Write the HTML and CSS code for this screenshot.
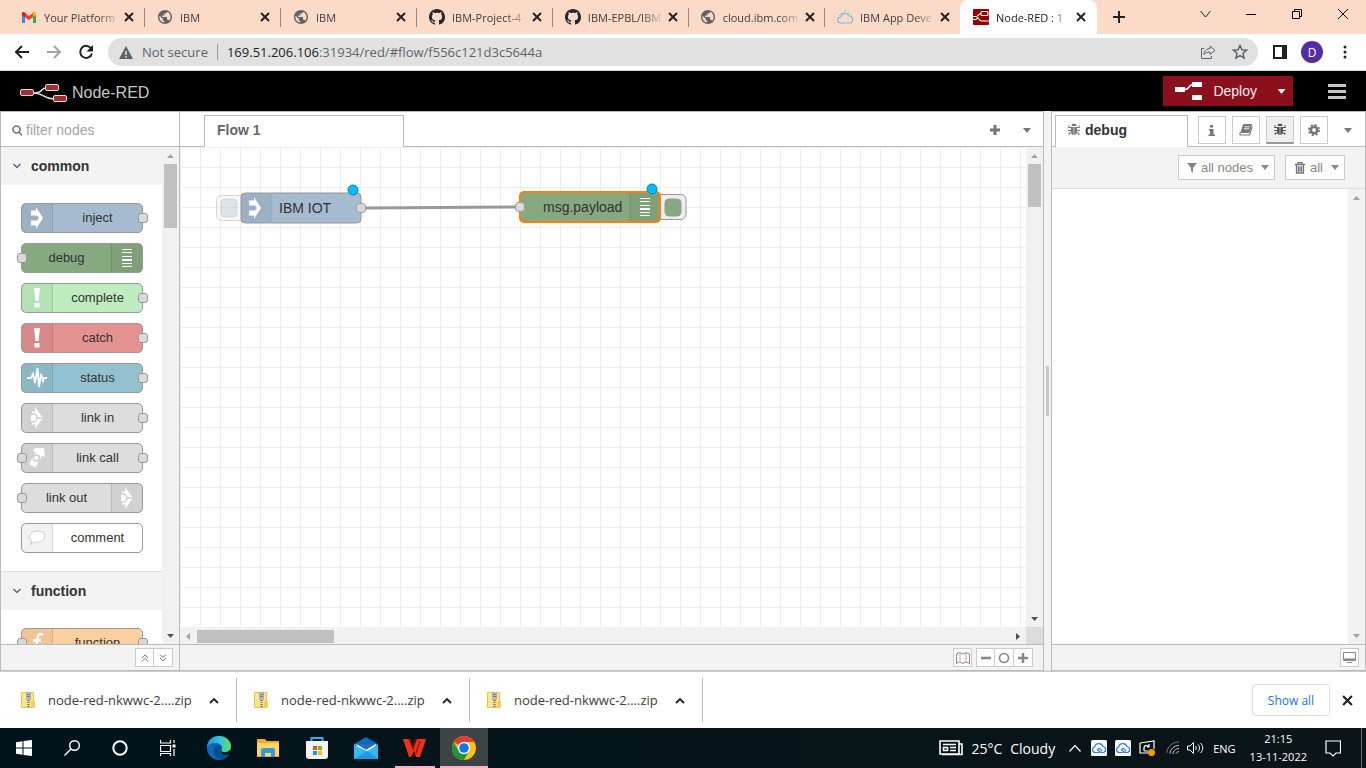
FILE: index.html
```html
<!DOCTYPE html>
<html lang="en">
<head>
<meta charset="utf-8">
<title>Node-RED</title>
<link rel="stylesheet" href="styles.css">
</head>
<body>
<svg class="sprite" aria-hidden="true">
  <symbol id="globe" viewBox="2 2 20 20"><path fill="#5f6368" d="M12 2C6.480 2 2 6.480 2 12s4.480 10 10 10 10-4.480 10-10S17.520 2 12 2zm-1 17.930c-3.950-.49-7-3.850-7-7.930 0-.62.08-1.210.21-1.790L9 15v1c0 1.100.9 2 2 2v1.930zm6.900-2.540c-.26-.81-1-1.390-1.900-1.390h-1v-3c0-.55-.45-1-1-1H8v-2h2c.55 0 1-.45 1-1V7h2c1.100 0 2-.9 2-2v-.41c2.930 1.190 5 4.060 5 7.410 0 2.080-.8 3.970-2.100 5.390z"/></symbol>
  <symbol id="github" viewBox="0 0 16 16"><path fill="#24292f" d="M8 0C3.58 0 0 3.58 0 8c0 3.54 2.29 6.53 5.47 7.59.4.07.55-.17.55-.38 0-.19-.01-.82-.01-1.49-2.01.37-2.53-.49-2.69-.94-.09-.23-.48-.94-.82-1.13-.28-.15-.68-.52-.01-.53.63-.01 1.08.58 1.23.82.72 1.21 1.87.87 2.33.66.07-.52.28-.87.51-1.07-1.78-.2-3.64-.89-3.64-3.95 0-.87.31-1.59.82-2.15-.08-.2-.36-1.02.08-2.12 0 0 .67-.21 2.2.82.64-.18 1.32-.27 2-.27s1.36.09 2 .27c1.53-1.04 2.2-.82 2.2-.82.44 1.1.16 1.92.08 2.12.51.56.82 1.27.82 2.15 0 3.07-1.87 3.75-3.65 3.95.29.25.54.73.54 1.48 0 1.07-.01 1.93-.01 2.2 0 .21.15.46.55.38A8.01 8.01 0 0 0 16 8c0-4.42-3.58-8-8-8z"/></symbol>
  <symbol id="close" viewBox="0 0 10 10"><path d="M1 1l8 8M9 1l-8 8" stroke="#202124" stroke-width="1.9" fill="none"/></symbol>
  <symbol id="caret" viewBox="0 0 8 5"><path d="M0 0h8L4 5z" fill="currentColor"/></symbol>
  <symbol id="chev" viewBox="0 0 8 6"><path d="M.5 1L4 4.500 7.500 1" stroke="#555" stroke-width="1.200" fill="none"/></symbol>
  <symbol id="bug" viewBox="0 0 12 13"><path fill="currentColor" d="M3.500 3a2.500 2.500 0 0 1 5 0zM3 4h2.700v8C4 12 3 10.500 3 8.500zM6.300 4H9v4.500C9 10.500 8 12 6.300 12z"/><path stroke="currentColor" stroke-width="1.100" fill="none" d="M.8 2.500V4.500H3M11.200 2.500V4.500H9M0 7.500h3M12 7.500H9M1.200 12V10h2.100M10.800 12V10H8.700"/></symbol>
  <symbol id="arrow-in" viewBox="0 0 14 24"><path fill="#fff" d="M1 4.500h5V1l7 11-7 11v-3.500H1v-5h6l2-2.500-2-2.500H1z"/></symbol>
  <symbol id="list" viewBox="0 0 10 18"><path fill="#fff" d="M0 0h10v1H0zM0 3h10v1H0zM0 7h10v1H0zM0 10h10v2H0zM0 14h10v1H0zM0 17h10v1H0z"/></symbol>
  <symbol id="bang" viewBox="0 0 8 20"><path fill="#fff" d="M1 0h6L5.500 13h-3zM1.500 15h5v4.500h-5z"/></symbol>
  <symbol id="link" viewBox="0 0 14 22"><path fill="#fff" d="M5 0l8 11-8 11v-5l-3 1v-3h-1V7h1V4l3 1z"/><path fill="none" stroke="#ccc" stroke-width="1.300" d="M0 7h3a4 4 0 0 1 0 8H0M7 11h6"/></symbol>
  <symbol id="zip" viewBox="0 0 14 16"><path fill="#ffe591" stroke="#ecc54c" d="M.5.5h12V15.500H.5z"/><path fill="#f7cf52" d="M10 9h4v6.500h-4z"/><path fill="#bbb" stroke="#999" stroke-width=".7" d="M5.500 0h4v7l-2 2-2-2z"/><path stroke="#666" stroke-width="2.200" stroke-dasharray="1 1" d="M7.500 8v8M7.500 2v4"/></symbol>
  <symbol id="cloud" viewBox="0 0 16 16"><rect width="16" height="16" rx="1.500" fill="#fff"/><path fill="none" stroke="#2878e8" stroke-width="1.200" d="M8 12.500H4a2.800 2.800 0 0 1-.3-5.500A4.300 4.300 0 0 1 12 6.500a3.100 3.100 0 0 1 .5 6H9.500L6.500 9.800c1.500-2 4-1.500 4 1.700"/></symbol>
</svg>

<header class="tabs">
  <button class="tab"><svg class="fav" viewBox="0 0 16 16"><path fill="#4285f4" d="M1 4v10h3V7z"/><path fill="#34a853" d="M12 7v7h3V4z"/><path fill="#ea4335" d="M1 4l2-1 5 4 5-4 2 1v2l-7 5-7-5z"/><path fill="#c5221f" d="M1 4v2l3 2V4L2.500 3z"/><path fill="#fbbc04" d="M15 4v2l-3 2V4l1.500-1z"/></svg><span>Your Platform</span><svg class="x"><use href="#close"/></svg></button>
  <button class="tab"><svg class="fav globe"><use href="#globe"/></svg><span>IBM</span><svg class="x"><use href="#close"/></svg></button>
  <button class="tab"><svg class="fav globe"><use href="#globe"/></svg><span>IBM</span><svg class="x"><use href="#close"/></svg></button>
  <button class="tab"><svg class="fav"><use href="#github"/></svg><span>IBM-Project-4</span><svg class="x"><use href="#close"/></svg></button>
  <button class="tab"><svg class="fav"><use href="#github"/></svg><span>IBM-EPBL/IBM</span><svg class="x"><use href="#close"/></svg></button>
  <button class="tab"><svg class="fav globe"><use href="#globe"/></svg><span>cloud.ibm.com</span><svg class="x"><use href="#close"/></svg></button>
  <button class="tab last"><svg class="fav" viewBox="0 0 16 16" fill="none"><path stroke="#78b8f0" stroke-width="1.200" d="M4 14a3 3 0 0 1-.5-6A4.500 4.500 0 0 1 12 7a3.500 3.500 0 0 1 0 7z"/><path stroke="#7fd6cf" stroke-width="1.300" d="M5 4.500l-1-1M8 3V1M11 4.500l1-1M13.500 6.500l1-1M2.500 6.500l-1-1"/></svg><span>IBM App Deve</span><svg class="x"><use href="#close"/></svg></button>
  <button class="tab active"><svg class="fav" viewBox="0 0 16 16"><rect width="16" height="16" rx="1" fill="#8f0000"/><g fill="none" stroke="#fff" stroke-width="1.100"><path d="M0 7.500h3c3 0 2-3 5-3M3 7.500c3 0 2 4.500 6 4.500h7"/><rect x="8" y="2.500" width="7" height="4" rx="1"/><path d="M0 10.500h3c1 0 1-2 2-2"/></g></svg><span>Node-RED : 1</span><svg class="x"><use href="#close"/></svg></button>
  <button class="newtab" aria-label="New tab"><svg width="12" height="12"><path d="M6 0v12M0 6h12" stroke="#202124" stroke-width="2"/></svg></button>
  <nav class="win">
    <button aria-label="Search tabs"><svg width="11" height="8"><path d="M.5 1l5 6 5-6" fill="none" stroke="#222"/></svg></button>
    <button aria-label="Minimize"><svg width="10" height="10"><path d="M0 5.500h10" stroke="#000"/></svg></button>
    <button aria-label="Restore"><svg width="10" height="10" fill="none" stroke="#000"><path d="M.5 2.500h7v7h-7zM2.500 2.500v-2h7v7h-2"/></svg></button>
    <button aria-label="Close"><svg width="10" height="10"><path d="M0 0l10 10M10 0L0 10" stroke="#000"/></svg></button>
  </nav>
</header>

<div class="toolbar">
  <button aria-label="Back"><svg width="16" height="16"><path d="M15 8H2M8 2L2 8l6 6" fill="none" stroke="#202124" stroke-width="2"/></svg></button>
  <button aria-label="Forward"><svg width="16" height="16"><path d="M1 8h13M8 2l6 6-6 6" fill="none" stroke="#a3a3a3" stroke-width="2"/></svg></button>
  <button aria-label="Reload"><svg width="16" height="16"><path d="M13.500 5A6 6 0 1 0 14 9.500" fill="none" stroke="#202124" stroke-width="2"/><path d="M15 1v6.500H8.500z" fill="#202124"/></svg></button>
  <div class="omni">
    <svg width="14" height="13"><path d="M7 0l7 13H0z" fill="#5f6368"/><path d="M6.200 5h1.600v4H6.200zM6.200 10h1.600v1.500H6.200z" fill="#e1e1e1"/></svg>
    <span class="secure">Not secure</span>
    <span class="url"><b>169.51.206.106</b>:31934/red/#flow/f556c121d3c5644a</span>
    <svg width="16" height="16" fill="none" stroke="#5f6368"><path d="M4 4.500H1.500v10h10V12" /><path d="M4 10.500c0-4 3-6 6-6V2l5 4.500-5 4V8c-3 0-5 1-6 2.500z"/></svg>
    <svg width="16" height="16" viewBox="0 0 16 16"><path d="M8 1.500l1.900 4.300 4.700.4-3.600 3.100 1.100 4.600L8 11.500l-4.100 2.400L5 9.300 1.400 6.200l4.700-.4z" fill="none" stroke="#5f6368" stroke-width="1.500"/></svg>
  </div>
  <button class="side" aria-label="Side panel"><svg width="14" height="14"><path d="M1 1h12v12H1z" fill="none" stroke="#202124" stroke-width="2"/><path d="M9 0h5v14H9z" fill="#202124"/></svg></button>
  <button class="avatar">D</button>
  <button class="dots" aria-label="Menu"><svg width="4" height="14" fill="#202124"><circle cx="2" cy="2" r="1.500"/><circle cx="2" cy="7" r="1.500"/><circle cx="2" cy="12" r="1.500"/></svg></button>
</div>

<div class="redhead">
  <svg width="48" height="18"><path d="M14 9c10 0 6-5 12-5M14 9c10 0 9 6 20 6" fill="none" stroke="#ddd" stroke-width="1.500"/><g fill="#a52d30" stroke="#ddd"><rect x=".5" y="5.500" width="13" height="6" rx="1.500"/><rect x="25.500" y=".5" width="13" height="6" rx="1.500"/><rect x="33.500" y="11.500" width="13" height="6" rx="1.500"/></g></svg>
  <h1>Node-RED</h1>
  <div class="deploy">
    <button class="go"><svg width="28" height="18"><path d="M0 5h10v5H0zM17 0h10v5H17zM17 13h10v5H17z" fill="#fff"/><path d="M10 7.500c5 0 3-5 8-5" fill="none" stroke="#fff" stroke-width="1.500"/></svg>Deploy</button>
    <button class="more" aria-label="Deploy options"><svg width="9" height="5"><use href="#caret"/></svg></button>
  </div>
  <button class="burger" aria-label="Main menu"><svg width="18" height="15"><path d="M0 1.500h18M0 7.500h18M0 13.500h18" stroke="#c7c7c7" stroke-width="3"/></svg></button>
</div>

<main class="editor">
  <section class="palette">
    <label class="search"><svg width="10" height="11" fill="none" stroke="#777" stroke-width="1.700"><circle cx="4.500" cy="4.500" r="3.500"/><path d="M7 7l3 3.500"/></svg><input type="text" placeholder="filter nodes" aria-label="filter nodes"></label>
    <div class="scroller">
      <div class="list">
        <h2><svg width="8" height="6"><use href="#chev"/></svg>common</h2>
        <div class="group">
          <div class="node inject"><i><svg width="14" height="24"><use href="#arrow-in"/></svg></i><span>inject</span><em class="out"></em></div>
          <div class="node debug flip"><i><svg width="10" height="18"><use href="#list"/></svg></i><span>debug</span><em class="in"></em></div>
          <div class="node complete"><i><svg width="8" height="20"><use href="#bang"/></svg></i><span>complete</span><em class="out"></em></div>
          <div class="node catch"><i><svg width="8" height="20"><use href="#bang"/></svg></i><span>catch</span><em class="out"></em></div>
          <div class="node status"><i><svg width="20" height="24"><path d="M0 12h4l2-4 2 9 2.500-15L12 21l2-13 2 7 1-3h3" fill="none" stroke="#fff" stroke-width="1.800"/></svg></i><span>status</span><em class="out"></em></div>
          <div class="node"><i><svg width="14" height="22"><use href="#link"/></svg></i><span>link in</span><em class="out"></em></div>
          <div class="node"><i><svg width="18" height="22"><path d="M7 1l9 0 1 9-3-1.500-6.500 12L1 17l6.500-11.500L5 4z" fill="#fff"/><circle cx="8.500" cy="11" r="3" fill="#fff" stroke="#ccc" stroke-width="1.300"/></svg></i><span>link call</span><em class="in"></em><em class="out"></em></div>
          <div class="node flip"><i><svg width="14" height="22"><use href="#link"/></svg></i><span>link out</span><em class="in"></em></div>
          <div class="node comment"><i><svg width="18" height="16"><path d="M4 11C-2 7 3 1 9 1s9 3 7.500 7-6 5-10 4L2 14.500z" fill="#fff" stroke="#ccc"/></svg></i><span>comment</span></div>
        </div>
        <h2 class="second"><svg width="8" height="6"><use href="#chev"/></svg>function</h2>
        <div class="group">
          <div class="node func"><i><svg width="14" height="24"><path d="M13 4c-3-2-5-1-5.500 3L6 18c-.5 3-2 4-5 3M3 9.500h8" fill="none" stroke="#fff" stroke-width="2.400"/></svg></i><span>function</span><em class="in"></em><em class="out"></em></div>
        </div>
      </div>
      <div class="vbar"><svg class="dim" width="7" height="4"><path d="M0 4h7L3.500 0z"/></svg><div class="thumb"></div><svg class="end" width="7" height="4"><path d="M0 0h7L3.500 4z"/></svg></div>
    </div>
    <footer class="foot"><div class="btns"><button aria-label="Collapse all"><svg width="8" height="8" fill="none" stroke="#777"><path d="M1 4l3-3 3 3M1 7.500l3-3 3 3"/></svg></button><button aria-label="Expand all"><svg width="8" height="8" fill="none" stroke="#777"><path d="M1 .5l3 3 3-3M1 4l3 3 3-3"/></svg></button></div></footer>
  </section>

  <section class="work">
    <div class="strip"><button class="flowtab">Flow 1</button>
      <button class="plus" aria-label="Add flow"><svg width="12" height="12"><path d="M6 1v10M1 6h10" stroke="#777" stroke-width="3"/></svg></button>
      <button class="plus" aria-label="List flows"><svg width="8" height="5"><use href="#caret"/></svg></button></div>
    <div class="canvaswrap">
      <svg class="canvas">
        <defs><pattern id="grid" width="20" height="20" patternUnits="userSpaceOnUse"><path d="M0 .5h20M.5 0v20" stroke="#eee"/></pattern></defs>
        <rect width="100%" height="100%" fill="url(#grid)"/>
        <path d="M186 61L335 60" stroke="#999" stroke-width="3"/>
        <g opacity=".4"><rect x="36.500" y="48.500" width="32" height="25" rx="5" fill="#eee" stroke="#999"/><rect x="41" y="52" width="16" height="18" rx="4" fill="#a6bbcf" stroke="#999"/></g>
        <rect x="61" y="46" width="120" height="30" rx="4" fill="#a6bbcf" stroke="#999"/>
        <path d="M65 46.500h26v29H65a4 4 0 0 1-4-4v-21a4 4 0 0 1 4-4z" fill="#000" opacity=".05"/><path d="M91 47v28" stroke="#000" opacity=".1"/>
        <use href="#arrow-in" x="68" y="49" width="14" height="24"/>
        <text x="99" y="66">IBM IOT</text>
        <rect x="176.500" y="56.500" width="9" height="9" rx="3" fill="#d9d9d9" stroke="#999"/>
        <circle cx="173" cy="43" r="5" fill="#00bcff" stroke="#0087c2"/>
        <rect x="474" y="47.500" width="32" height="25" rx="5" fill="#eee" stroke="#999"/><rect x="485" y="52" width="16" height="17" rx="4" fill="#87a980" stroke="#999"/>
        <rect x="340" y="45" width="140" height="30" rx="4" fill="#87a980" stroke="#ff7f0e" stroke-width="2"/>
        <path d="M450 46h29v28h-29z" fill="#000" opacity=".05"/><path d="M450 46v28" stroke="#000" opacity=".12"/>
        <use href="#list" x="460" y="51" width="10" height="18"/>
        <text x="363" y="65">msg.payload</text>
        <rect x="335.500" y="55.500" width="9" height="9" rx="3" fill="#d9d9d9" stroke="#999"/>
        <circle cx="472" cy="42" r="5" fill="#00bcff" stroke="#0087c2"/>
      </svg>
      <div class="vbar"><svg class="dim" width="7" height="4"><path d="M0 4h7L3.500 0z"/></svg><div class="thumb short"></div><svg class="end" width="7" height="4"><path d="M0 0h7L3.500 4z"/></svg></div>
      <div class="hbar"><svg class="dim" width="4" height="7"><path d="M4 0v7L0 3.500z"/></svg><div class="hthumb"></div><svg class="end" width="4" height="7"><path d="M0 0v7l4-3.500z"/></svg></div>
      <div class="corner"></div>
    </div>
    <footer class="foot"><div class="btns"><button aria-label="Navigator"><svg width="16" height="14" fill="none" stroke="#888"><path d="M1.500 3l3-1.500L8 3l3-1.500L14.500 3v9.500L11 11l-3 1.500L4.500 11l-3 1.500z"/><path d="M5 2v9M11 2v9" stroke="#d99"/></svg></button></div><div class="btns"><button aria-label="Zoom out"><svg width="10" height="10"><path d="M0 5h10" stroke="#888" stroke-width="2.500"/></svg></button><button aria-label="Reset zoom"><svg width="12" height="12"><circle cx="6" cy="6" r="4.500" fill="none" stroke="#888" stroke-width="1.700"/></svg></button><button aria-label="Zoom in"><svg width="10" height="10"><path d="M0 5h10M5 0v10" stroke="#888" stroke-width="2.500"/></svg></button></div></footer>
  </section>

  <div class="sep"><div></div></div>

  <section class="sidebar">
    <div class="strip"><button class="dbgtab"><svg width="12" height="13"><use href="#bug"/></svg>debug</button>
      <div class="icons">
        <button aria-label="Information"><svg width="8" height="11" fill="#777"><path d="M2 0h3v2.500H2zM1 4h4.500v5.500H7V11H.5V9.500H2v-4H1z"/></svg></button>
        <button aria-label="Help"><svg width="14" height="12"><path d="M4.500.5h8L10 8.500H2z" fill="#777" stroke="#777" stroke-linejoin="round"/><path d="M2 8.500c-1.500 0-1.500 2.500 0 2.500h8.500L13.300 2.500" fill="none" stroke="#777" stroke-width="1.200"/><path d="M5.500 2.800h5M5 4.800h5" stroke="#fff" stroke-width=".9"/></svg></button>
        <button class="on" aria-label="Debug messages"><svg width="12" height="13"><use href="#bug"/></svg></button>
        <button aria-label="Configuration"><svg width="12" height="12" fill="none" stroke="#777"><circle cx="6" cy="6" r="3.200" stroke-width="2.600"/><circle cx="6" cy="6" r="5" stroke-width="2" stroke-dasharray="2 1.930"/></svg></button>
        <button class="plain" aria-label="More"><svg width="8" height="5"><use href="#caret"/></svg></button>
      </div></div>
    <div class="filters"><button><svg width="10" height="10"><path d="M0 0h10L6 5v5L4 8V5z" fill="#888"/></svg>all nodes<svg class="c" width="8" height="5"><use href="#caret"/></svg></button><button><svg width="12" height="12" fill="none" stroke="#777"><path d="M1 2.500h10M4 2V.5h4V2" stroke-width="1.300"/><path d="M2.500 3v8h7V3" fill="#c9d6ea" stroke-width="1.300"/><path d="M4.500 4.500V9.500M6 4.500V9.500M7.500 4.500V9.500"/></svg>all<svg class="c" width="8" height="5"><use href="#caret"/></svg></button></div>
    <div class="scroller"><div class="messages"></div><div class="vbar"><svg class="dim" width="7" height="4"><path d="M0 4h7L3.500 0z"/></svg><svg class="dim end" width="7" height="4"><path d="M0 0h7L3.500 4z"/></svg></div></div>
    <footer class="foot"><div class="btns"><button aria-label="Open window"><svg width="13" height="11"><path d="M.5.5h12v8H.5z" fill="#fff" stroke="#888"/><path d="M1 6.500h11v2H1zM4 10h5v1H4z" fill="#888"/></svg></button></div></footer>
  </section>
</main>

<div class="downloads">
  <div class="dl"><svg width="14" height="16"><use href="#zip"/></svg><a href="#">node-red-nkwwc-2....zip</a><button aria-label="Options"><svg width="10" height="7"><path d="M1 6l4-4 4 4" fill="none" stroke="#202124" stroke-width="1.800"/></svg></button></div>
  <div class="dl"><svg width="14" height="16"><use href="#zip"/></svg><a href="#">node-red-nkwwc-2....zip</a><button aria-label="Options"><svg width="10" height="7"><path d="M1 6l4-4 4 4" fill="none" stroke="#202124" stroke-width="1.800"/></svg></button></div>
  <div class="dl"><svg width="14" height="16"><use href="#zip"/></svg><a href="#">node-red-nkwwc-2....zip</a><button aria-label="Options"><svg width="10" height="7"><path d="M1 6l4-4 4 4" fill="none" stroke="#202124" stroke-width="1.800"/></svg></button></div>
  <button class="showall">Show all</button>
  <button class="dismiss" aria-label="Close"><svg width="11" height="11"><use href="#close"/></svg></button>
</div>

<footer class="taskbar">
  <div class="sys">
    <button aria-label="Start"><svg width="16" height="16" fill="#fff"><path d="M0 2.200l6.500-.9v6.200H0zM7.500 1.100L16 0v7.500H7.500zM0 8.500h6.500v6.200L0 13.800zM7.500 8.500H16V16l-8.500-1.100z"/></svg></button>
    <button aria-label="Search"><svg width="16" height="16" fill="none" stroke="#fff" stroke-width="1.400"><circle cx="10.500" cy="5.500" r="4.800"/><path d="M7 9l-6.500 6.500"/></svg></button>
    <button aria-label="Cortana"><svg width="16" height="16"><circle cx="8" cy="8" r="6.700" fill="none" stroke="#fff" stroke-width="2"/></svg></button>
    <button aria-label="Task view"><svg width="16" height="16" fill="none" stroke="#fff" stroke-width="1.200"><path d="M.5 0v3h10V0M.5 5.500h10v6H.5zM.5 16v-2.500h10V16M14 0v3M14 9v7"/><path d="M12.500 4.500h3v3h-3z" fill="#fff" stroke="none"/></svg></button>
  </div>
  <div class="apps">
    <button aria-label="Edge"><svg width="24" height="24"><defs><linearGradient id="e1" x1="0" x2="1"><stop offset="0" stop-color="#1c8fe0"/><stop offset=".5" stop-color="#2fc3e3"/><stop offset="1" stop-color="#64df56"/></linearGradient></defs><circle cx="12" cy="12" r="12" fill="#0f67b8"/><path d="M0 12C0 3 7 0 12 0c7 0 12 5 12 10 0 4-3 6-6 6-4 0-4-1.500-3.500-3C16 9 12 6.500 8 7c-4 0-7 2-8 5z" fill="url(#e1)"/><path d="M15 12c-1-4-6-4-8 0-2 5 2 11 8 11.500 3-.5 6-3 7.500-5.500-5 2-10 0-9-3z" fill="#0a4d94"/><path d="M14.500 13c-.5 2 0 3.500 4 3.300 2-.2 4.200-1.300 5-2.800l1 4-2 .5c-6 2.500-10-1-8-5z" fill="#00131a"/></svg></button>
    <button aria-label="File Explorer"><svg width="22" height="20"><path d="M0 1h8l2 2h12v16H0z" fill="#f0ad2c"/><path d="M0 5h22v13H0z" fill="#ffd566"/><path d="M4 19v-8l2-1h10l2 1v8h-4v-4H8v4z" fill="#3a97dd"/></svg></button>
    <button aria-label="Store"><svg width="24" height="24"><path d="M6.500 6V2h11v4" fill="none" stroke="#2eb0ef" stroke-width="2"/><path d="M1 5h22v15a3 3 0 0 1-3 3H4a3 3 0 0 1-3-3z" fill="#f3f3f3"/><path fill="#f25022" d="M8 10h4v4H8z"/><path fill="#7fba00" d="M13 10h4v4h-4z"/><path fill="#00a4ef" d="M8 15h4v4H8z"/><path fill="#ffb900" d="M13 15h4v4h-4z"/></svg></button>
    <button aria-label="Mail"><svg width="24" height="22"><path d="M0 7l12-7 12 7v15H0z" fill="#1265b8"/><path d="M2 7h20v7l-10 4z" fill="#f4f7fa"/><path d="M2 7h20l-10 6z" fill="#1c6fc0"/><path d="M0 7l13 7L24 7v15H0z" fill="#35b8f1"/><path d="M2 7l10 6L22 7l-2 3-7 4L4 10z" fill="#f4f7fa"/><path d="M0 22l13-8L24 22z" fill="#1d9be2"/></svg></button>
    <button class="run" aria-label="WPS"><svg width="24" height="20"><path d="M0 1h7l3 10 4-10h9l-6 18h-4l-2-6-3 6H6z" fill="#f0311c"/><path d="M6 1l5 11M12 1l-2 10M17 3l-4 12" stroke="#8a0f0a" stroke-width="1.200"/></svg></button>
    <button class="run current" aria-label="Chrome"><svg width="24" height="24"><circle cx="12" cy="12" r="12" fill="#fbc116"/><path d="M12 12L1.600 6A12 12 0 0 1 22.400 6H12z" fill="#e33b2e"/><path d="M1.600 6A12 12 0 0 0 12 24l5.200-9L12 12 6.800 15z" fill="#229342"/><circle cx="12" cy="12" r="6.200" fill="#fff"/><circle cx="12" cy="12" r="4.800" fill="#1a73e8"/></svg></button>
  </div>
  <div class="tray">
    <svg width="24" height="16" fill="none" stroke="#fff" stroke-width="1.600"><path d="M1 1h19v13H1zM20 4h3v10.500H3"/><path d="M4 4.500h13M11 7.500h6M11 10.500h6M4.500 7.500h4v3h-4z"/></svg>
    <span class="weather"><span>25°C</span><span>Cloudy</span></span>
    <svg class="expand" width="12" height="7"><path d="M.5 6.500l5.500-6 5.500 6" fill="none" stroke="#fff" stroke-width="1.200"/></svg>
    <div class="trayicons">
    <svg width="16" height="16"><use href="#cloud"/></svg>
    <svg width="16" height="16"><use href="#cloud"/></svg>
    <svg width="16" height="16" fill="none" stroke="#fff" stroke-width="1.200"><path d="M1 3l14-2v8M1 3v10h8M5 8c0-3 4-3 5-1M5 11h4M5 8v3M10 4v3H8"/><circle cx="12.500" cy="12.500" r="3.500" fill="#ff9800" stroke="none"/></svg></div>
    <svg class="wifi" width="14" height="14" fill="none" stroke="#ccc"><path d="M1 12C1 6 6 1 13 1" stroke="#777"/><path d="M4 12.500c0-4 4-8 9-8M7 13c0-3 2-5 6-5.500M10 13c0-1 1-2 3-2.500"/></svg>
    <svg class="vol" width="17" height="14" fill="none" stroke="#fff"><path d="M.5 5h2.500l3.500-3.500v11L3 9H.5zM8.500 5c1 1 1 3 0 4M11 3.500c2 2 2 5 0 7M13.500 2c3 3 3 7 0 10"/></svg>
    <span class="lang">ENG</span>
    <span class="clock">21:15<br>13-11-2022</span>
    <svg class="note" width="16" height="17" fill="none" stroke="#fff" stroke-width="1.200"><path d="M1 1h14.500v12H11l-3 3-3-3H1z"/></svg>
    <div class="desk"></div>
  </div>
</footer>
</body>
</html>
```
FILE: styles.css
```css
* { box-sizing: border-box; }
body {
  margin: 0;
  height: 100vh;
  display: flex;
  flex-direction: column;
  overflow: hidden;
  background: #fff;
  font-family: "Liberation Sans", Arial, sans-serif;
  font-size: 14px;
  color: #333;
}
button, input { font: inherit; color: inherit; border: 0; background: none; padding: 0; margin: 0; }
button { display: flex; align-items: center; justify-content: center; }
svg { display: block; flex: none; }
a { color: inherit; text-decoration: none; }
.sprite { position: absolute; width: 0; height: 0; }

/* browser chrome */
.tabs, .toolbar, .downloads, .taskbar { font-family: "Open Sans", "Noto Sans", sans-serif; flex: none; }
.tabs { height: 34px; background: #fcdac8; display: flex; padding-left: 8px; }
.tab { width: 136px; padding: 0 9px 0 13px; gap: 7px; font-size: 11px; color: #3c4043; position: relative; }
.tab span {
  flex: 1; text-align: left; white-space: nowrap;
  -webkit-mask-image: linear-gradient(to right, #000 75%, rgba(0, 0, 0, .15));
  mask-image: linear-gradient(to right, #000 75%, rgba(0, 0, 0, .15));
}
.tab::after { content: ""; position: absolute; right: -1px; top: 8px; width: 1px; height: 19px; background: #9b8a82; }
.tab.last::after, .tab.active::after { display: none; }
.tab.active { width: 137px; padding-right: 10px; background: #fff; border-radius: 8px 8px 0 0; color: #202124; }
.fav { width: 16px; height: 16px; }
.globe { padding: 1px; }
.x { width: 10px; height: 10px; margin-right: 1px; }
.newtab { width: 44px; }
.win { margin-left: auto; display: flex; align-items: center; height: 28px; }
.win button { width: 46px; height: 28px; }

.toolbar { height: 37px; display: flex; align-items: center; padding: 0 19px 0 6px; border-bottom: 1px solid #cfd6d3; }
.toolbar > button { width: 32px; height: 32px; }
.omni { flex: 1; height: 28px; margin-left: 6px; border-radius: 14px; background: #e1e1e1; display: flex; align-items: center; padding: 0 10px 0 11px; font-size: 13px; color: #5f6368; }
.secure { margin-left: 9px; padding-right: 9px; border-right: 1px solid #9a9a9a; line-height: 16px; }
.url { flex: 1; padding-left: 9px; }
.url b { font-weight: 400; color: #202124; }
.omni svg:last-child { margin-left: 16px; }
.toolbar .side { margin-left: 6px; }
.toolbar .avatar { width: 22px; height: 22px; border-radius: 50%; background: #512da8; color: #fff; font-size: 12px; margin-left: 5px; }
.toolbar .dots { width: 4px; margin-left: 20px; }

/* editor header */
.redhead { flex: none; height: 40px; background: #000; display: flex; align-items: center; padding: 0 20px; }
.redhead h1 { margin: 0 0 0 4px; padding-top: 4px; font-size: 16px; font-weight: 400; color: #c7c7c7; }
.redhead > svg { margin-top: 4px; }
.deploy { margin-left: auto; display: flex; height: 30px; background: #8c101c; color: #eee; }
.go { padding: 0 12px; gap: 10px; }
.more { width: 24px; color: #eee; }
.burger { margin-left: 35px; }

/* editor */
.editor { flex: 1; min-height: 0; display: grid; grid-template-columns: 180px minmax(0, 1fr) 7px 315px; border-bottom: 1px solid #ccc; }
.palette, .work, .sidebar { display: flex; flex-direction: column; min-height: 0; min-width: 0; border: 1px solid #bbb; }
.work { border-left: 0; }
.sep { background: #f3f3f3; display: flex; align-items: center; justify-content: center; border-bottom: 1px solid #ddd; }
.sep div { width: 3px; height: 50px; background: #c8c8c8; }
.search, .strip { flex: none; height: 35px; border-bottom: 1px solid #bbb; display: flex; align-items: center; }
.search { padding: 2px 11px 0; gap: 4px; }
.search input { flex: 1; min-width: 0; outline: 0; }
.search input::placeholder { color: #a5a5a5; opacity: 1; }
.scroller { flex: 1; min-height: 0; display: flex; }
.list { flex: 1; overflow: hidden; }
.list h2 { margin: 0; height: 38px; padding-left: 12px; background: #f3f3f3; font-size: 14px; display: flex; align-items: center; gap: 10px; }
.list .second { height: 39px; border-top: 1px solid #ddd; }
.group { padding: 18px 0 18px 20px; display: flex; flex-direction: column; gap: 10px; }
.node { position: relative; width: 122px; height: 30px; flex: none; border: 1px solid #999; border-radius: 5px; background: #ddd; display: flex; font-size: 13px; }
.node i { width: 31px; display: flex; align-items: center; justify-content: center; background: rgba(0, 0, 0, .05); border-right: 1px solid rgba(0, 0, 0, .1); }
.node span { flex: 1; display: flex; align-items: center; justify-content: center; padding-bottom: 2px; }
.flip { flex-direction: row-reverse; }
.flip i { border-right: 0; border-left: 1px solid rgba(0, 0, 0, .1); }
.node em { position: absolute; top: 9px; width: 10px; height: 10px; border: 1px solid #999; border-radius: 3px; background: #d9d9d9; }
.in { left: -5px; }
.out { right: -6px; }
.inject { background: #a6bbcf; }
.debug { background: #87a980; }
.complete { background: #c0edc0; }
.catch { background: #e49191; }
.status { background: #94c1d0; }
.comment { background: #fff; }
.func { background: #fdd0a2; }

.vbar { width: 17px; flex: none; background: #f1f1f1; display: flex; flex-direction: column; align-items: center; padding: 7px 0 6px; fill: #505050; }
.dim { fill: #a3a3a3; }
.thumb { width: 13px; height: 64px; background: #c1c1c1; margin-top: 6px; }
.thumb.short { height: 43px; }
.vbar .end { margin-top: auto; }
.hbar { background: #f1f1f1; display: flex; align-items: center; padding: 1px 6px 0; fill: #505050; }
.hthumb { width: 137px; height: 13px; background: #c1c1c1; margin-left: 7px; }
.hbar .end { margin-left: auto; }
.corner { background: #dcdcdc; }
.foot { flex: none; height: 26px; background: #f3f3f3; border-top: 1px solid #bbb; display: flex; align-items: center; justify-content: flex-end; gap: 4px; padding-right: 6px; }
.btns { display: flex; border: 1px solid #ccc; background: #fff; }
.btns button { width: 17px; height: 17px; }
.btns button + button { width: 19px; border-left: 1px solid #ccc; }
.work .foot { padding-right: 10px; }

.strip { color: #777; align-items: flex-end; }
.flowtab, .dbgtab { background: #fff; border: 1px solid #bbb; border-bottom: 0; height: 32px; margin-bottom: -1px; font-weight: 700; justify-content: flex-start; padding: 0 12px 4px; }
.flowtab { width: 200px; margin-left: 24px; margin-right: auto; color: #666; }
.plus { width: 32px; height: 32px; }
.canvaswrap { flex: 1; min-height: 0; display: grid; grid-template: minmax(0, 1fr) 17px / minmax(0, 1fr) 17px; }
.canvas { width: 100%; height: 100%; }
.canvas text { font-size: 14px; fill: #333; }

.dbgtab { width: 133px; margin-left: 3px; gap: 5px; color: #333; }
.dbgtab svg { color: #777; }
.icons { margin-left: auto; display: flex; gap: 6px; padding: 0 3px 2px 0; }
.icons button { width: 28px; height: 28px; border: 1px solid #ccc; }
.icons .on { background: #efefef; border-bottom: 2px solid #999; color: #555; }
.icons .plain { border: 0; }
.filters { flex: none; height: 42px; background: #f3f3f3; border-bottom: 1px solid #ddd; display: flex; align-items: center; justify-content: flex-end; gap: 10px; padding-right: 20px; color: #888; font-size: 13px; }
.filters button { height: 25px; padding: 0 5px 0 8px; border: 1px solid #ccc; background: #fff; gap: 4px; }
.filters .c { margin-left: 4px; }
.messages { flex: 1; }

/* downloads */
.downloads { height: 56px; display: flex; align-items: center; font-size: 13px; color: #3c4043; }
.dl { width: 233px; height: 44px; border-right: 1px solid #bbb; display: flex; align-items: center; padding-left: 18px; }
.dl:first-child { width: 237px; padding-left: 22px; }
.dl svg:first-child { margin-right: 13px; margin-left: -1px; }
.dl a { flex: 1; white-space: nowrap; }
.dl button { width: 44px; height: 40px; }
.dl button svg:first-child { margin: 0; }
.showall { margin-left: auto; width: 78px; height: 32px; border: 1px solid #dadce0; border-radius: 4px; color: #1a73e8; font-size: 12px; }
.dismiss { margin: 0 13px 0 12px; }

/* taskbar */
.taskbar { height: 40px; background: linear-gradient(to right, #00131a, #0b1518); color: #fff; display: flex; }
.sys, .apps, .tray { display: flex; align-items: center; }
.sys button, .apps button { width: 48px; height: 40px; }
.apps { gap: 1px; margin-left: 3px; }
.run { position: relative; }
.run::after { content: ""; position: absolute; left: 4px; right: 4px; bottom: 0; height: 2px; background: #ffb0c4; }
.apps .current { background: #3c4446; }
.current::after { left: 0; right: 0; }
.tray { margin-left: auto; font-size: 11px; white-space: nowrap; }
.weather { display: flex; gap: 8px; font-size: 14px; margin-left: 8px; }
.expand { margin: 0 10px 0 14px; }
.trayicons { display: flex; gap: 8px; }
.wifi { margin-left: 11px; }
.vol { margin-left: 7px; }
.lang { margin-left: 9px; }
.clock { margin-left: 14px; text-align: center; line-height: 18px; }
.note { margin: 0 20px 0 18px; }
.desk { width: 5px; height: 40px; border-left: 1px solid #66706f; }
```
